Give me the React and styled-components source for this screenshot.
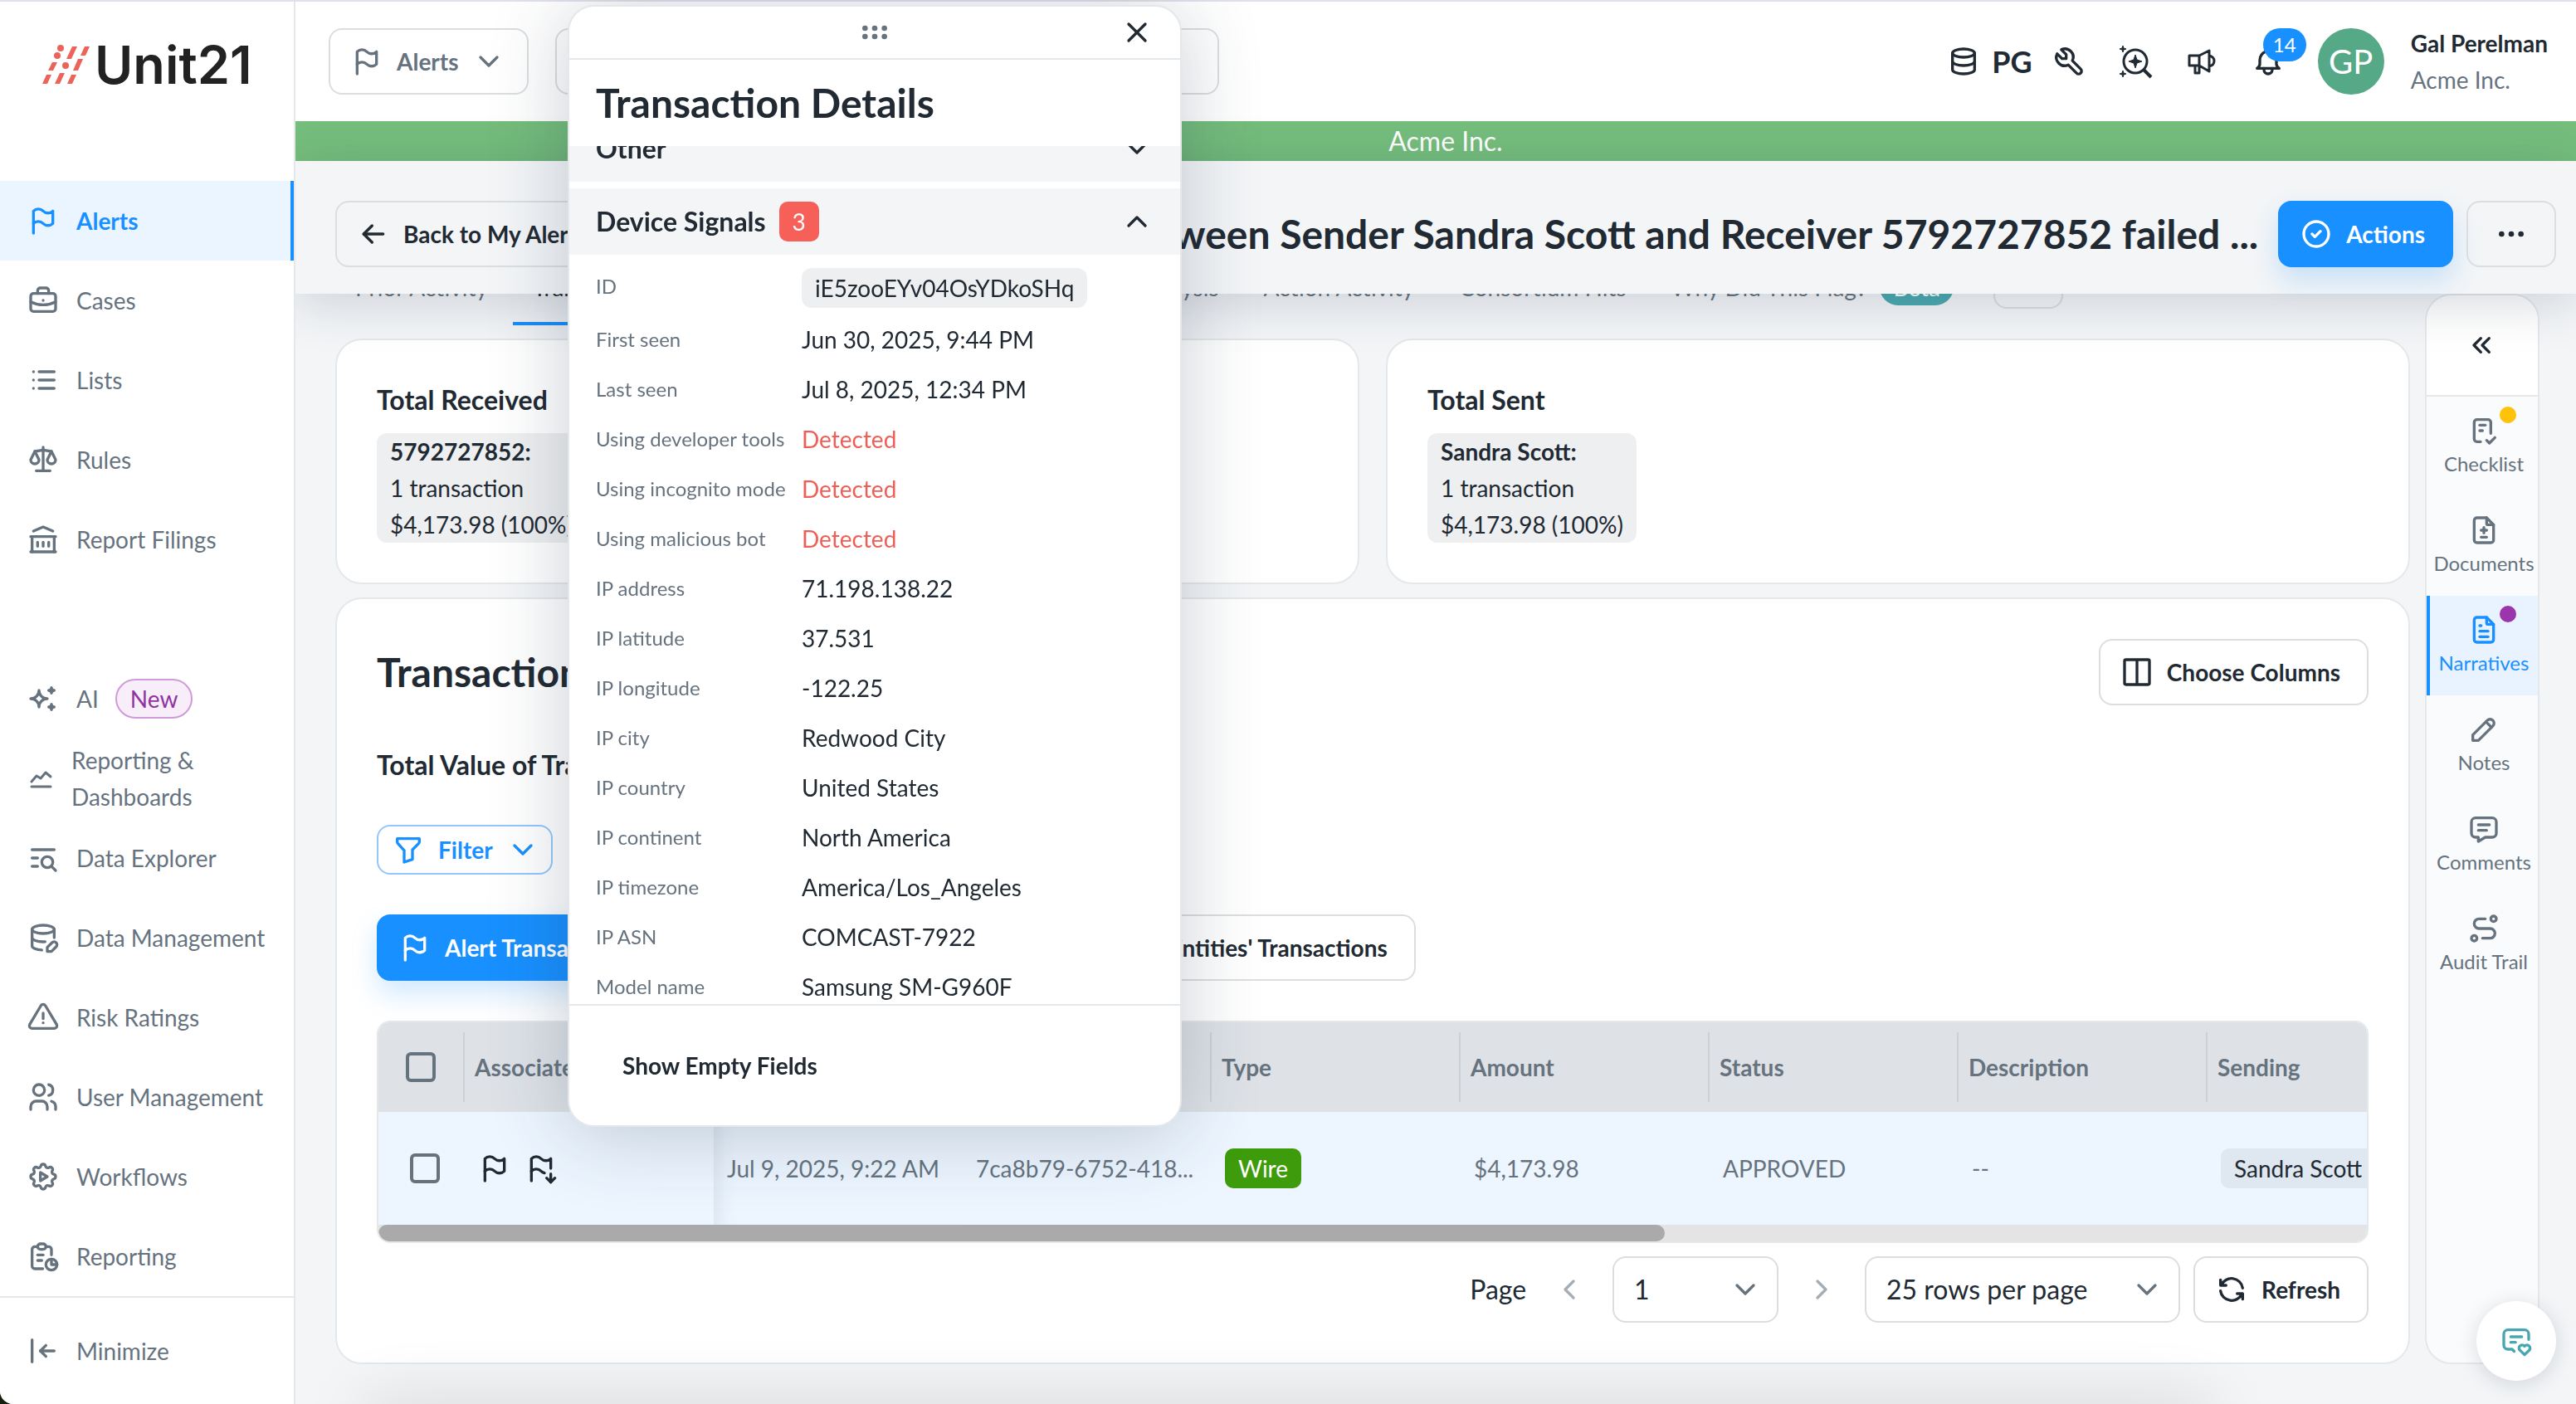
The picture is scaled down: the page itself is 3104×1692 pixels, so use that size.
import styled, { createGlobalStyle, css } from "styled-components";
import {
  TbFlag,
  TbBriefcase,
  TbList,
  TbScale,
  TbBuildingBank,
  TbSparkles,
  TbListSearch,
  TbDatabaseEdit,
  TbAlertTriangle,
  TbUsers,
  TbSettingsAutomation,
  TbReport,
  TbArrowBarToLeft,
  TbChevronDown,
  TbChevronUp,
  TbChevronLeft,
  TbChevronRight,
  TbChevronsLeft,
  TbDatabase,
  TbTool,
  TbBell,
  TbArrowLeft,
  TbCircleCheck,
  TbDots,
  TbColumns2,
  TbFilter,
  TbFlagDown,
  TbRefresh,
  TbGripHorizontal,
  TbX,
  TbChecklist,
  TbFileDiff,
  TbFileText,
  TbPencil,
  TbMessage,
  TbRoute,
  TbMessage2Heart,
} from "react-icons/tb";

const DashboardIcon = () => (
  <svg width="34" height="40" viewBox="0 0 34 40" fill="none" stroke="currentColor" strokeWidth="3" strokeLinecap="round" strokeLinejoin="round">
    <path d="M6 24l6-7 5 3 6-7 6 5M6 30h23" />
  </svg>
);

const InvestigateIcon = () => (
  <svg width="44" height="44" viewBox="0 0 44 44" fill="none" stroke="currentColor" strokeWidth="3">
    <circle cx="22" cy="22" r="14" />
    <path d="M32 32l9 9" strokeWidth="4" />
    <path d="M22 14l2 6 6 2-6 2-2 6-2-6-6-2 6-2zM7 3l1 3 3 1-3 1-1 3-1-3-3-1 3-1zM7 33l1 3 3 1-3 1-1 3-1-3-3-1 3-1z" fill="currentColor" strokeWidth="1" />
  </svg>
);

const AnnounceIcon = () => (
  <svg width="40" height="40" viewBox="0 0 40 40" fill="none" stroke="currentColor" strokeWidth="3" strokeLinejoin="round">
    <path d="M5 13h12L29 7v25l-12-7H5zM17 13v12M12 25v9h5v-9M29 13c4 1 6 3 6 6.500s-2 5.500-6 6.500" />
  </svg>
);

const LogoMark = () => (
  <svg width="58" height="48" viewBox="50 54 58 48" fill="#ec6359">
    <path d="M51 101h6l5-11h-6zM58 85h6l5-10h-6zM66 101h6l6-13h-6zM80 71h6l7-15h-6zM81 101h6l5-11h-6zM88 85h6l6-14h-6zM97 67h6l5-11h-6z" />
    <circle cx="69" cy="67" r="4" />
    <circle cx="73" cy="58" r="4" />
    <circle cx="79" cy="79" r="4" />
  </svg>
);

const mainMenu = [
  { label: "Alerts", icon: TbFlag, active: true },
  { label: "Cases", icon: TbBriefcase },
  { label: "Lists", icon: TbList },
  { label: "Rules", icon: TbScale },
  { label: "Report Filings", icon: TbBuildingBank },
];

const adminMenu = [
  { label: "AI", icon: TbSparkles, tag: "New" },
  { label: "Reporting & Dashboards", icon: DashboardIcon },
  { label: "Data Explorer", icon: TbListSearch },
  { label: "Data Management", icon: TbDatabaseEdit },
  { label: "Risk Ratings", icon: TbAlertTriangle },
  { label: "User Management", icon: TbUsers },
  { label: "Workflows", icon: TbSettingsAutomation },
  { label: "Reporting", icon: TbReport },
];

const railItems = [
  { label: "Checklist", icon: TbChecklist, dot: "#ffc20a" },
  { label: "Documents", icon: TbFileDiff },
  { label: "Narratives", icon: TbFileText, dot: "#9b35ab", active: true },
  { label: "Notes", icon: TbPencil },
  { label: "Comments", icon: TbMessage },
  { label: "Audit Trail", icon: TbRoute },
];

const signals = [
  { label: "First seen", value: "Jun 30, 2025, 9:44 PM" },
  { label: "Last seen", value: "Jul 8, 2025, 12:34 PM" },
  { label: "Using developer tools", value: "Detected", alert: true },
  { label: "Using incognito mode", value: "Detected", alert: true },
  { label: "Using malicious bot", value: "Detected", alert: true },
  { label: "IP address", value: "71.198.138.22" },
  { label: "IP latitude", value: "37.531" },
  { label: "IP longitude", value: "-122.25" },
  { label: "IP city", value: "Redwood City" },
  { label: "IP country", value: "United States" },
  { label: "IP continent", value: "North America" },
  { label: "IP timezone", value: "America/Los_Angeles" },
  { label: "IP ASN", value: "COMCAST-7922" },
  { label: "Model name", value: "Samsung SM-G960F" },
];

const columns = ["Associated", "Date", "ID", "Type", "Amount", "Status", "Description", "Sending"];

const Menu = ({ items }) => (
  <MenuList>
    {items.map(({ label, icon: Icon, active, tag }) => (
      <li key={label}>
        <MenuLink href="#" $active={active}>
          <Icon />
          <span>{label}</span>
          {tag && <NewTag>{tag}</NewTag>}
        </MenuLink>
      </li>
    ))}
  </MenuList>
);

const SideBar = () => (
  <Side>
    <Logo>
      <LogoMark />
      Unit21
    </Logo>
    <Menu items={mainMenu} />
    <Menu items={adminMenu} />
    <SideFooter>
      <MinimizeBtn>
        <TbArrowBarToLeft />
        Minimize
      </MinimizeBtn>
    </SideFooter>
  </Side>
);

const Header = () => (
  <TopBar>
    <ScopeBtn>
      <TbFlag />
      Alerts
      <TbChevronDown />
    </ScopeBtn>
    <SearchInput type="search" aria-label="Search" />
    <TopActions>
      <Workspace>
        <TbDatabase />
        PG
      </Workspace>
      <IconBtn aria-label="Tools">
        <TbTool />
      </IconBtn>
      <IconBtn aria-label="Investigate">
        <InvestigateIcon />
      </IconBtn>
      <IconBtn aria-label="Announcements">
        <AnnounceIcon />
      </IconBtn>
      <IconBtn aria-label="Notifications">
        <TbBell />
        <BellCount>14</BellCount>
      </IconBtn>
      <Avatar>GP</Avatar>
      <UserInfo>
        <strong>Gal Perelman</strong>
        <span>Acme Inc.</span>
      </UserInfo>
    </TopActions>
  </TopBar>
);

const Total = ({ title, name }) => (
  <Card>
    <SubTitle>{title}</SubTitle>
    <TotalChip>
      <strong>{name}:</strong>
      <span>1 transaction</span>
      <span>$4,173.98 (100%)</span>
    </TotalChip>
  </Card>
);

const TransactionTable = () => (
  <TableWrap>
    <TableClip>
      <Table>
        <colgroup>
          <col className="check" />
          {columns.map((name) => (
            <col key={name} />
          ))}
        </colgroup>
        <thead>
          <tr>
            <th>
              <HeadCell $center>
                <CheckBox aria-label="Select all" />
              </HeadCell>
            </th>
            {columns.map((name) => (
              <th key={name}>
                <HeadCell>{name}</HeadCell>
              </th>
            ))}
          </tr>
        </thead>
        <tbody>
          <tr>
            <CheckTd>
              <CheckBox aria-label="Select transaction" />
            </CheckTd>
            <td>
              <Flags>
                <TbFlag />
                <TbFlagDown />
              </Flags>
            </td>
            <ScrolledTd>Jul 9, 2025, 9:22 AM</ScrolledTd>
            <td>7ca8b79-6752-418...</td>
            <td>
              <TypeTag>Wire</TypeTag>
            </td>
            <td>$4,173.98</td>
            <td>APPROVED</td>
            <td>--</td>
            <td>
              <PartyChip>Sandra Scott</PartyChip>
            </td>
          </tr>
        </tbody>
      </Table>
    </TableClip>
    <ScrollTrack>
      <ScrollThumb />
    </ScrollTrack>
  </TableWrap>
);

const Pagination = () => (
  <Pager>
    <span>Page</span>
    <PageBtn aria-label="Previous page">
      <TbChevronLeft />
    </PageBtn>
    <SelectBox $width={200}>
      <select aria-label="Page">
        <option>1</option>
      </select>
      <TbChevronDown />
    </SelectBox>
    <PageBtn aria-label="Next page">
      <TbChevronRight />
    </PageBtn>
    <SelectBox $width={380}>
      <select aria-label="Rows per page">
        <option>25 rows per page</option>
      </select>
      <TbChevronDown />
    </SelectBox>
    <RefreshBtn>
      <TbRefresh />
      Refresh
    </RefreshBtn>
  </Pager>
);

const DetailsPanel = () => (
  <Panel role="dialog" aria-label="Transaction Details">
    <PanelBar>
      <TbGripHorizontal />
      <CloseBtn aria-label="Close">
        <TbX />
      </CloseBtn>
    </PanelBar>
    <PanelTitle>Transaction Details</PanelTitle>
    <PanelBody>
      <PanelScroll>
        <Section>
          Other
          <TbChevronDown />
        </Section>
        <Section>
          Device Signals
          <Count>3</Count>
          <TbChevronUp />
        </Section>
        <Fields>
          <dt>ID</dt>
          <dd>
            <IdChip>iE5zooEYv04OsYDkoSHq</IdChip>
          </dd>
          {signals.map(({ label, value, alert }) => (
            <Field key={label} $alert={alert}>
              <dt>{label}</dt>
              <dd>{value}</dd>
            </Field>
          ))}
        </Fields>
      </PanelScroll>
    </PanelBody>
    <PanelFooter>
      <TextBtn>Show Empty Fields</TextBtn>
    </PanelFooter>
  </Panel>
);

const Rail = () => (
  <RailBox>
    <RailToggle aria-label="Expand">
      <TbChevronsLeft />
    </RailToggle>
    {railItems.map(({ label, icon: Icon, dot, active }) => (
      <RailItem key={label} $active={active}>
        <Icon />
        {label}
        {dot && <Dot $color={dot} />}
      </RailItem>
    ))}
  </RailBox>
);

const App = () => {
  return (
    <>
      <GlobalStyle />
      <Page>
        <SideBar />
        <Main>
          <Header />
          <Banner>Acme Inc.</Banner>
          <PageHeader>
            <Button>
              <TbArrowLeft />
              Back to My Alerts
            </Button>
            <PageTitle>
              Transaction between Sender Sandra Scott and Receiver 5792727852 failed ...
            </PageTitle>
            <PrimaryBtn>
              <TbCircleCheck />
              Actions
            </PrimaryBtn>
            <MoreBtn aria-label="More">
              <TbDots />
            </MoreBtn>
          </PageHeader>
          <Body>
            <Content>
              <Tabs>
                <Tab href="#">Prior Activity</Tab>
                <Tab href="#" $active>
                  Transactions
                </Tab>
                <Tab href="#" $last>
                  Network Analysis
                </Tab>
                <Tab href="#">Action Activity</Tab>
                <Tab href="#">Consortium Hits</Tab>
                <Tab href="#">
                  Why Did This Flag? <Beta>Beta</Beta>
                </Tab>
                <MoreTabs aria-label="More tabs" />
              </Tabs>
              <Totals>
                <Total title="Total Received" name="5792727852" />
                <Total title="Total Sent" name="Sandra Scott" />
              </Totals>
              <Card>
                <CardHead>
                  <Title>Transactions</Title>
                  <Button>
                    <TbColumns2 />
                    Choose Columns
                  </Button>
                </CardHead>
                <Stack>
                  <SubTitle>Total Value of Transactions</SubTitle>
                  <FilterBtn>
                    <TbFilter />
                    Filter
                    <TbChevronDown />
                  </FilterBtn>
                  <Switcher>
                    <PrimaryBtn>
                      <TbFlag />
                      Alert Transactions
                    </PrimaryBtn>
                    <SwitchBtn>All Alert Entities' Transactions</SwitchBtn>
                    <SwitchBtn>Related Entities' Transactions</SwitchBtn>
                  </Switcher>
                  <TransactionTable />
                </Stack>
                <Pagination />
              </Card>
            </Content>
            <Rail />
          </Body>
        </Main>
      </Page>
      <DetailsPanel />
      <BottomShade />
      <ChatBtn aria-label="Feedback">
        <TbMessage2Heart />
      </ChatBtn>
    </>
  );
};

export default App;

const dark = "#212a33";
const gray = "#66737f";
const blue = "#1890ff";
const line = "#e5e8ea";

const GlobalStyle = createGlobalStyle`
  * {
    box-sizing: border-box;
  }
  body {
    margin: 0;
    background-color: #14200f;
    color: ${dark};
    font-family: Lato, "Liberation Sans", sans-serif;
    font-size: 28px;
    line-height: 44px;
  }
  button, input, select {
    font: inherit;
    color: inherit;
    margin: 0;
  }
  button {
    cursor: pointer;
  }
  a {
    text-decoration: none;
  }
  h1, h2, h3, dl, dd, ul {
    margin: 0;
    padding: 0;
  }
  svg {
    flex-shrink: 0;
  }
  svg[height="1em"] {
    width: 40px;
    height: 40px;
  }
`;

const Page = styled.div`
  display: flex;
  min-height: 100vh;
  overflow: hidden;
  background-color: #f3f5f7;
  border-top: 2px solid #e1e0ea;
  border-bottom-left-radius: 16px;
`;

const Side = styled.nav`
  position: relative;
  z-index: 3;
  width: 356px;
  flex-shrink: 0;
  display: flex;
  flex-direction: column;
  background-color: #fff;
  border-right: 2px solid ${line};
`;

const Logo = styled.div`
  height: 216px;
  padding: 44px 50px;
  display: flex;
  align-items: flex-start;
  gap: 6px;
  font-family: Inter, sans-serif;
  font-size: 63px;
  line-height: 64px;
  font-weight: 600;
  color: #222;
  svg {
    margin-top: 8px;
  }
`;

const MenuList = styled.ul`
  list-style: none;
  + ul {
    margin-top: 96px;
  }
`;

const MenuLink = styled.a`
  height: 96px;
  padding: 0 32px;
  display: flex;
  align-items: center;
  gap: 20px;
  color: ${gray};
  ${(props) =>
    props.$active &&
    css`
      color: ${blue};
      font-weight: 700;
      background-color: #ebf5ff;
      border-right: 4px solid ${blue};
    `}
`;

const NewTag = styled.span`
  padding: 0 16px;
  border: 2px solid #cf9bd8;
  border-radius: 24px;
  background-color: #f8eef9;
  color: #9132a2;
`;

const SideFooter = styled.div`
  margin-top: auto;
  border-top: 2px solid ${line};
`;

const MinimizeBtn = styled.button`
  width: 100%;
  height: 128px;
  padding: 0 32px;
  display: flex;
  align-items: center;
  gap: 20px;
  border: none;
  background: none;
  color: ${gray};
`;

const Main = styled.main`
  flex: 1;
  min-width: 0;
  display: flex;
  flex-direction: column;
`;

const TopBar = styled.header`
  height: 144px;
  padding: 0 34px 0 40px;
  display: flex;
  align-items: center;
  gap: 32px;
  background-color: #fff;
`;

const Button = styled.button`
  height: 80px;
  padding: 0 32px 0 24px;
  display: inline-flex;
  align-items: center;
  gap: 16px;
  flex-shrink: 0;
  border: 2px solid #dbdee1;
  border-radius: 16px;
  background-color: transparent;
  color: ${dark};
  font-weight: 700;
  white-space: nowrap;
`;

const ScopeBtn = styled(Button)`
  padding: 0 26px 0 24px;
  color: ${gray};
`;

const MoreBtn = styled(Button)`
  padding: 0 32px;
`;

const SwitchBtn = styled(Button)`
  padding: 0 32px;
`;

const PrimaryBtn = styled(Button)`
  border-color: ${blue};
  background-color: ${blue};
  color: #fff;
  box-shadow: 0 16px 32px rgba(24, 144, 255, 0.2);
`;

const SearchInput = styled.input`
  width: 800px;
  height: 80px;
  padding: 0 32px;
  border: 2px solid #dbdee1;
  border-radius: 16px;
  background-color: #fff;
`;

const TopActions = styled.div`
  margin-left: auto;
  display: flex;
  align-items: center;
`;

const Workspace = styled.button`
  display: flex;
  align-items: center;
  gap: 14px;
  padding: 0 4px;
  border: none;
  background: none;
  font-size: 36px;
  font-weight: 700;
`;

const IconBtn = styled.button`
  position: relative;
  width: 80px;
  height: 80px;
  padding: 0;
  display: flex;
  align-items: center;
  justify-content: center;
  border: none;
  background: none;
`;

const BellCount = styled.span`
  position: absolute;
  top: 0;
  right: -6px;
  padding: 0 12px;
  border-radius: 20px;
  background-color: ${blue};
  color: #fff;
  font-size: 24px;
  line-height: 40px;
`;

const Avatar = styled.div`
  width: 80px;
  height: 80px;
  margin: 0 32px 0 20px;
  border-radius: 50%;
  background-color: #55a987;
  color: #fff;
  font-size: 40px;
  line-height: 80px;
  text-align: center;
`;

const UserInfo = styled.div`
  display: flex;
  flex-direction: column;
  span {
    color: ${gray};
  }
`;

const Banner = styled.div`
  padding-left: 24px;
  background-color: #75be7c;
  color: #fff;
  font-size: 32px;
  line-height: 48px;
  text-align: center;
`;

const PageHeader = styled.div`
  position: relative;
  z-index: 2;
  height: 160px;
  padding: 16px 24px 0 48px;
  display: flex;
  align-items: center;
  gap: 16px;
  background-color: #f3f5f7;
  box-shadow: 0 8px 64px rgba(35, 45, 75, 0.2);
`;

const Title = styled.h2`
  font-size: 48px;
  line-height: 64px;
  font-weight: 700;
`;

const PageTitle = styled(Title).attrs({ as: "h1" })`
  flex: 1;
  min-width: 0;
  padding-right: 8px;
  overflow: hidden;
  text-align: right;
  text-overflow: ellipsis;
  white-space: nowrap;
`;

const Body = styled.div`
  flex: 1;
  padding: 0 44px 48px 48px;
  display: flex;
  gap: 18px;
`;

const Content = styled.div`
  flex: 1;
  min-width: 0;
  display: flex;
  flex-direction: column;
  gap: 16px;
`;

const Tabs = styled.nav`
  height: 80px;
  margin-top: -42px;
  display: flex;
  align-items: flex-start;
`;

const Tab = styled.a`
  height: 80px;
  padding: 12px 30px 0 24px;
  display: flex;
  gap: 16px;
  white-space: nowrap;
  color: ${(props) => (props.$active ? dark : gray)};
  border-bottom: 4px solid ${(props) => (props.$active ? blue : "transparent")};
  margin-left: ${(props) => (props.$last ? "auto" : 0)};
`;

const Beta = styled.span`
  height: 44px;
  padding: 0 16px;
  border-radius: 22px;
  background-color: #4aa9ae;
  color: #fff;
`;

const MoreTabs = styled.button`
  width: 84px;
  height: 60px;
  margin: 0 418px 0 18px;
  border: 2px solid #dbdee1;
  border-radius: 16px;
  background: none;
`;

const Totals = styled.div`
  display: grid;
  grid-template-columns: 1fr 1fr;
  gap: 32px;
`;

const Card = styled.section`
  padding: 48px;
  border: 2px solid ${line};
  border-radius: 32px;
  background-color: #fff;
`;

const CardHead = styled.div`
  display: flex;
  align-items: center;
  justify-content: space-between;
`;

const SubTitle = styled.h3`
  font-size: 32px;
  line-height: 48px;
  font-weight: 700;
`;

const TotalChip = styled.div`
  width: fit-content;
  margin-top: 16px;
  padding: 0 16px;
  display: flex;
  flex-direction: column;
  border-radius: 12px;
  background-color: #eeeff0;
`;

const Stack = styled.div`
  margin-top: 48px;
  display: flex;
  flex-direction: column;
  align-items: flex-start;
  gap: 48px;
`;

const FilterBtn = styled(Button)`
  height: 60px;
  padding: 0 14px 0 16px;
  border-color: #93c6ff;
  color: ${blue};
`;

const Switcher = styled.div`
  display: flex;
  gap: 20px;
`;

const TableWrap = styled.div`
  width: 100%;
  overflow: hidden;
  border: 2px solid ${line};
  border-radius: 16px;
`;

const TableClip = styled.div`
  overflow: hidden;
`;

const Table = styled.table`
  width: 2504px;
  table-layout: fixed;
  border-collapse: collapse;
  color: ${gray};
  col {
    width: 300px;
  }
  col.check {
    width: 104px;
  }
  th {
    padding: 12px 0;
    background-color: #dee2e7;
    text-align: left;
  }
  td {
    height: 136px;
    padding: 0 16px;
    background-color: #edf6ff;
    white-space: nowrap;
  }
`;

const HeadCell = styled.div`
  height: 84px;
  padding: 0 12px;
  display: flex;
  align-items: center;
  justify-content: ${(props) => (props.$center ? "center" : "flex-start")};
  border-right: 2px solid #cdd1d6;
`;

const CheckTd = styled.td`
  && {
    padding: 0 0 0 38px;
  }
`;

const ScrolledTd = styled.td`
  box-shadow: inset 24px 0 24px -20px rgba(60, 80, 110, 0.12);
`;

const CheckBox = styled.input.attrs({ type: "checkbox" })`
  width: 36px;
  height: 36px;
  display: block;
  appearance: none;
  border: 4px solid ${gray};
  border-radius: 6px;
`;

const Flags = styled.div`
  display: flex;
  gap: 16px;
  color: ${dark};
`;

const TypeTag = styled.span`
  display: inline-block;
  padding: 0 16px;
  border-radius: 10px;
  background-color: #3e9b0b;
  color: #fff;
  line-height: 48px;
`;

const PartyChip = styled(TypeTag)`
  background-color: #dfe7f0;
  color: ${dark};
`;

const ScrollTrack = styled.div`
  height: 20px;
  background-color: #e4e4e4;
`;

const ScrollThumb = styled.div`
  width: 64.7%;
  height: 20px;
  border-radius: 10px;
  background-color: #aaa;
`;

const Pager = styled.div`
  margin-top: 16px;
  display: flex;
  align-items: center;
  justify-content: flex-end;
  font-size: 32px;
`;

const PageBtn = styled.button`
  width: 104px;
  height: 80px;
  padding: 0;
  display: flex;
  align-items: center;
  justify-content: center;
  border: none;
  background: none;
  color: #a5adb5;
`;

const SelectBox = styled.div`
  position: relative;
  width: ${(props) => props.$width}px;
  select {
    width: 100%;
    height: 80px;
    padding: 0 24px;
    appearance: none;
    border: 2px solid #dbdee1;
    border-radius: 16px;
    background-color: #fff;
  }
  svg {
    position: absolute;
    top: 20px;
    right: 20px;
    color: ${gray};
    pointer-events: none;
  }
`;

const RefreshBtn = styled(Button)`
  margin-left: 16px;
  font-size: 28px;
`;

const RailBox = styled.aside`
  width: 138px;
  display: flex;
  flex-direction: column;
  overflow: hidden;
  border: 2px solid ${line};
  border-radius: 32px;
  background-color: #fafbfc;
`;

const RailToggle = styled.button`
  height: 122px;
  padding: 0;
  display: flex;
  align-items: center;
  justify-content: center;
  border: none;
  border-bottom: 2px solid ${line};
  background-color: #fff;
`;

const RailItem = styled.button`
  position: relative;
  height: 120px;
  padding: 2px 0 0;
  display: flex;
  flex-direction: column;
  align-items: center;
  justify-content: center;
  border: none;
  border-left: 4px solid ${(props) => (props.$active ? blue : "transparent")};
  background-color: ${(props) => (props.$active ? "#e9f2ff" : "transparent")};
  color: ${(props) => (props.$active ? blue : gray)};
  font-size: 24px;
  line-height: 40px;
`;

const Dot = styled.span`
  position: absolute;
  top: 12px;
  right: 26px;
  width: 20px;
  height: 20px;
  border-radius: 50%;
  background-color: ${(props) => props.$color};
`;

const Panel = styled.div`
  position: fixed;
  z-index: 10;
  top: 6px;
  left: 684px;
  width: 740px;
  overflow: hidden;
  border: 2px solid ${line};
  border-radius: 32px;
  background-color: #fff;
  box-shadow: 0 8px 96px rgba(35, 50, 75, 0.24);
`;

const PanelBar = styled.div`
  position: relative;
  height: 64px;
  display: flex;
  align-items: center;
  justify-content: center;
  border-bottom: 2px solid ${line};
  color: ${gray};
`;

const CloseBtn = styled.button`
  position: absolute;
  right: 32px;
  padding: 0;
  display: flex;
  border: none;
  background: none;
  color: ${dark};
`;

const PanelTitle = styled(Title)`
  padding: 20px 32px;
`;

const PanelBody = styled.div`
  height: 1034px;
  overflow: hidden;
`;

const PanelScroll = styled.div`
  margin-top: -37px;
`;

const Section = styled.button`
  width: 100%;
  height: 80px;
  margin-bottom: 8px;
  padding: 0 32px;
  display: flex;
  align-items: center;
  gap: 16px;
  border: none;
  background-color: #f3f5f7;
  font-size: 32px;
  font-weight: 700;
  svg {
    margin-left: auto;
  }
`;

const Count = styled.span`
  width: 48px;
  border-radius: 10px;
  background-color: #f66059;
  color: #fff;
  font-size: 28px;
  font-weight: 400;
  line-height: 48px;
`;

const Fields = styled.dl`
  padding: 8px 32px;
  display: grid;
  grid-template-columns: 248px 1fr;
  row-gap: 16px;
  dt {
    color: ${gray};
    font-size: 24px;
    white-space: nowrap;
  }
`;

const Field = styled.div`
  display: contents;
  dd {
    color: ${(props) => (props.$alert ? "#ee5f58" : dark)};
  }
`;

const IdChip = styled.span`
  display: inline-block;
  padding: 0 16px;
  border-radius: 12px;
  background-color: #eeeff0;
  line-height: 48px;
  vertical-align: top;
`;

const PanelFooter = styled.div`
  padding: 32px;
  border-top: 2px solid ${line};
`;

const TextBtn = styled.button`
  height: 80px;
  padding: 0 32px;
  border: none;
  background: none;
  font-weight: 700;
`;

const BottomShade = styled.div`
  position: fixed;
  z-index: 4;
  bottom: -40px;
  left: 440px;
  right: 440px;
  height: 40px;
  box-shadow: 0 0 80px rgba(0, 0, 0, 0.16);
  pointer-events: none;
`;

const ChatBtn = styled.button`
  position: fixed;
  z-index: 5;
  right: 24px;
  bottom: 28px;
  width: 96px;
  height: 96px;
  padding: 0;
  display: flex;
  align-items: center;
  justify-content: center;
  border: none;
  border-radius: 50%;
  background-color: #fff;
  color: #48a6b0;
  box-shadow: 0 4px 24px rgba(35, 50, 75, 0.16);
`;
